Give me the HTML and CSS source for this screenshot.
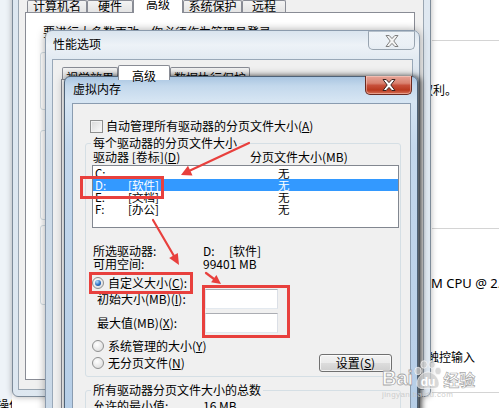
FILE: index.html
```html
<!DOCTYPE html>
<html lang="zh-CN">
<head>
<meta charset="utf-8">
<title>虚拟内存</title>
<link rel="stylesheet" href="styles.css">
</head>
<body>
<div class="desk">
  <div class="cp">
    <div class="cp-nav"><span class="nav-frag">操作</span></div>
    <div class="cp-main">
      <div class="cp-rule r1"></div>
      <div class="cp-text t1">权利。</div>
      <div class="cp-rule r2"></div>
      <div class="cp-text t2">M CPU @ 2.50GHz</div>
      <div class="cp-text t3">触控输入</div>
      <div class="cp-rule r3"></div>
    </div>
  </div>

  <div class="win sp">
    <div class="sp-client">
      <div class="tabs sp-tabs">
        <span class="tab tw1">计算机名</span>
        <span class="tab tw2">硬件</span>
        <span class="tab sel tw3">高级</span>
        <span class="tab tw4">系统保护</span>
        <span class="tab tw5">远程</span>
      </div>
      <div class="sp-panel">
        <div class="sp-note">要进行大多数更改，你必须作为管理员登录。</div>
        <div class="sp-grp g1"></div>
        <div class="sp-grp g2"></div>
        <div class="sp-grp g3"></div>
      </div>
    </div>
  </div>

  <div class="win pf">
    <div class="titlebar">
      <span class="title">性能选项</span>
      <span class="close close-off"><svg width="14" height="12" viewBox="0 0 14 12"><polygon points="1,0.5 4.2,0.5 7,3.6 9.8,0.5 13,0.5 8.8,6 13,11.5 9.8,11.5 7,8.4 4.2,11.5 1,11.5 5.2,6" fill="#f4f4f4" stroke="#808080" stroke-width="1"/></svg></span>
    </div>
    <div class="pf-client">
      <div class="tabs pf-tabs">
        <span class="tab pw1">视觉效果</span>
        <span class="tab sel pw2">高级</span>
        <span class="tab pw3">数据执行保护</span>
      </div>
      <div class="pf-panel"></div>
    </div>
  </div>

  <div class="win vm">
    <div class="titlebar">
      <span class="title">虚拟内存</span>
      <span class="close close-on"><svg width="14" height="12" viewBox="0 0 14 12"><polygon points="1,0.5 4.2,0.5 7,3.6 9.8,0.5 13,0.5 8.8,6 13,11.5 9.8,11.5 7,8.4 4.2,11.5 1,11.5 5.2,6" fill="#ffffff" stroke="#3b2320" stroke-width="1"/></svg></span>
    </div>
    <div class="vm-client">
      <div class="chk-row"><span class="chk"></span><span>自动管理所有驱动器的分页文件大小(<u>A</u>)</span></div>
      <fieldset class="grp grp1">
        <legend>每个驱动器的分页文件大小</legend>
        <div class="hdr"><span class="col-drv">驱动器 [卷标](<u>D</u>)</span><span>分页文件大小(MB)</span></div>
        <div class="list">
          <div class="row"><span class="c1">C:</span><span class="c2"></span><span>无</span></div>
          <div class="row on"><span class="c1">D:</span><span class="c2">[软件]</span><span>无</span></div>
          <div class="row"><span class="c1">E:</span><span class="c2">[文档]</span><span>无</span></div>
          <div class="row"><span class="c1">F:</span><span class="c2">[办公]</span><span>无</span></div>
        </div>
        <div class="info i1"><span class="lab">所选驱动器:</span><span class="dv">D:</span><span>[软件]</span></div>
        <div class="info"><span class="lab">可用空间:</span><span>99401 MB</span></div>
        <div class="radio-row rc"><span class="radio on"></span><span>自定义大小(<u>C</u>):</span></div>
        <div class="size-row"><span class="sl">初始大小(MB)(<u>I</u>):</span><span class="input"></span></div>
        <div class="size-row s2"><span class="sl">最大值(MB)(<u>X</u>):</span><span class="input"></span></div>
        <div class="radio-row rs"><span class="radio"></span><span>系统管理的大小(<u>Y</u>)</span></div>
        <div class="radio-row rn"><span class="radio"></span><span>无分页文件(<u>N</u>)</span><span class="btn">设置(<u>S</u>)</span></div>
      </fieldset>
      <fieldset class="grp grp2">
        <legend>所有驱动器分页文件大小的总数</legend>
        <div class="info total"><span class="lab">允许的最小值:</span><span>16 MB</span></div>
      </fieldset>
    </div>
  </div>

  <div class="marks">
    <div class="box b1"></div>
    <div class="box b2"></div>
    <div class="box b3"></div>
    <svg class="arrows" width="499" height="408" viewBox="0 0 499 408">
      <g stroke="#e8403d" stroke-width="2.2" stroke-linecap="round" fill="none">
        <line x1="249" y1="143" x2="189" y2="171"/>
        <line x1="153" y1="220" x2="174" y2="256"/>
        <line x1="206" y1="273" x2="214" y2="279"/>
      </g>
      <g fill="#e8403d">
        <polygon points="181,175 192.5,175.5 188,165.8"/>
        <polygon points="179,265 177.8,253 169.2,258"/>
        <polygon points="221,284 216.4,275.1 211.1,282.3"/>
      </g>
    </svg>
  </div>

  <div class="wm">
    <div class="wm-logo">
      <span class="wm-bai">Bai</span>
      <svg class="paw" width="28" height="30" viewBox="0 0 28 30">
        <g fill="rgba(205,205,205,0.75)" stroke="rgba(255,255,255,0.8)" stroke-width="0.8">
          <ellipse cx="4" cy="11" rx="3.2" ry="3.8"/>
          <ellipse cx="10" cy="4.5" rx="3.2" ry="3.8"/>
          <ellipse cx="18" cy="4.5" rx="3.2" ry="3.8"/>
          <ellipse cx="24" cy="11" rx="3.2" ry="3.8"/>
          <path d="M14 12 C20 12 26 19 25 25 C24 29 19 29 14 28 C9 29 4 29 3 25 C2 19 8 12 14 12 Z"/>
        </g>
        <text x="14" y="26" text-anchor="middle" class="du">du</text>
      </svg>
      <span class="wm-jy">经验</span>
    </div>
    <div class="wm-url">jingyan.baidu.com</div>
  </div>
</div>
</body>
</html>
```

FILE: styles.css
```css
* { box-sizing: border-box; }
html, body { margin: 0; padding: 0; }
body {
  width: 499px; height: 408px; overflow: hidden;
  font-family: "Noto Sans CJK SC", "Noto Sans", sans-serif;
  font-size: 12px; color: #000; background: #fff;
}
u { text-decoration: underline; text-underline-offset: 1px; }
.desk { position: relative; width: 499px; height: 408px; overflow: hidden; }

/* control panel behind */
.cp { display: grid; grid-template-columns: 12px 1fr; height: 408px; }
.cp-nav { background: #eef3f8; display: flex; flex-direction: column; justify-content: flex-end; }
.nav-frag { line-height: 12px; white-space: nowrap; margin: 0 0 -3px -3px; }
.cp-main { background: #fff; padding-left: 409px; }
.cp-rule { height: 1px; background: #d4d4d4; margin-left: 11px; }
.cp-text { line-height: 12px; white-space: nowrap; }
.r1 { margin-top: 40px; }
.t1 { margin-top: 43px; }
.r2 { margin-top: 132px; }
.t2 { margin-top: 48px; margin-left: 10px; font-family: "Noto Sans", sans-serif; font-size: 13px; }
.t3 { margin-top: 62px; margin-left: 6px; }
.r3 { margin-top: 29px; }

/* windows */
.win { position: absolute; display: flex; flex-direction: column; }
.titlebar { display: flex; justify-content: space-between; align-items: flex-start; flex: none; }
.title { line-height: 12px; margin-left: 1px; white-space: nowrap; }
.close {
  width: 47px; height: 19px; flex: none;
  display: flex; align-items: center; justify-content: center;
  border-radius: 0 0 5px 5px;
}
.close-off {
  border: 1px solid #98a4b0; border-top-color: #b5c0cb;
  background: linear-gradient(rgba(255,255,255,0.55), rgba(225,232,240,0.5));
}
.close-on {
  border: 1px solid #6a2a20; border-top: none;
  background: linear-gradient(#e7a598 0%, #d98270 40%, #c7503b 52%, #b9391f 78%, #d8745a 100%);
  box-shadow: inset 0 0 0 1px rgba(255,220,210,0.45);
}

/* tabs */
.tabs { display: flex; align-items: flex-end; flex: none; }
.tab {
  height: 12px; border: 1px solid #898c95; border-bottom: none;
  border-radius: 2px 2px 0 0;
  background: linear-gradient(#f3f3f3, #e4e4e4);
  text-align: center; white-space: nowrap;
}
.tab.sel { height: 15px; margin-bottom: -1px; background: #fff; position: relative; z-index: 1; }

/* system properties */
.sp {
  left: 12px; top: -30px; width: 419px; height: 427px;
  border: 1px solid #7d8b99; border-radius: 0 0 6px 6px;
  background: linear-gradient(90deg, #dde7f0, #e9eff5 50%, #dfe8f1);
  padding: 27px 6px 6px 5px;
  box-shadow: 0 0 6px rgba(0,0,0,0.3);
}
.sp-client {
  flex: 1; display: flex; flex-direction: column;
  background: #f0f0f0; border: 1px solid #9aa6b2;
  padding: 0 8px 0 6px;
}
.sp-tabs { height: 12px; margin-top: 1px; margin-left: 2px; }
.sp-tabs .tab { line-height: 9px; }
.sp-tabs .tab.sel { line-height: 10px; }
.tw1 { width: 60px; } .tw2 { width: 46px; } .tw3 { width: 50px; } .tw4 { width: 59px; } .tw5 { width: 44px; }
.sp-panel { height: 368px; flex: none; background: #fff; border: 1px solid #898c95; padding: 13px 0 0 14px; }
.sp-note { margin-left: 3px; line-height: 12px; white-space: nowrap; }
.sp-grp { width: 360px; border: 1px solid #d5dfe5; border-radius: 3px; }
.g1 { margin-top: 14px; height: 58px; }
.g2 { margin-top: 20px; height: 90px; }
.g3 { margin-top: 5px; height: 80px; }

/* performance options */
.pf {
  left: 45px; top: 30px; width: 375px; height: 390px;
  border: 1px solid #8b9bad; border-radius: 7px 7px 0 0;
  padding: 0 6px;
  background: linear-gradient(180deg, #d9e4ee 0%, #edf2f7 14px, #e2eaf2 28px, #cddbe8 120px, #c9d8e7 100%);
  box-shadow: 0 0 8px rgba(0,0,0,0.35);
}
.pf .titlebar { height: 28px; }
.pf .title { margin-top: 7px; }
.pf .close { margin-right: -2px; }
.pf-client {
  flex: 1; display: flex; flex-direction: column;
  background: #f0f0f0; border: 1px solid #99a8b8; padding-left: 8px;
}
.pf-tabs { height: 14px; margin-top: 5px; margin-left: 1px; }
.pf-tabs .tab { line-height: 12px; padding-top: 4px; }
.pw1 { width: 56px; } .pw2 { width: 52px; } .pw3 { width: 80px; }
.pf-panel { flex: 1; background: #fff; border: 1px solid #898c95; }

/* virtual memory */
.vm {
  left: 64px; top: 76px; width: 354px; height: 340px;
  border: 1px solid #4f6378; border-radius: 6px 6px 0 0;
  padding: 0 6px 0 7px;
  background: linear-gradient(180deg, #a9c5e1 0%, #c3d8ec 9px, #d6e5f3 24px, #c4d8ed 70px, #b6cee7 100%);
  box-shadow: 3px 0 5px rgba(0,0,0,0.55), 0 0 10px rgba(0,0,0,0.35);
}
.vm .titlebar { height: 26px; }
.vm .title { margin-top: 6px; }
.vm .close { margin-top: -1px; margin-right: -1px; }
.vm-client { flex: 1; background: #f0f0f0; border: 1px solid #8a9cb0; }

.chk-row { display: flex; align-items: center; height: 14px; margin-top: 15px; padding-left: 17px; line-height: 12px; white-space: nowrap; }
.chk {
  width: 13px; height: 13px; flex: none; margin-right: 3px;
  border: 1px solid #8e8f8f;
  background: linear-gradient(135deg, #d8d8d8, #fbfbfb);
  box-shadow: inset 0 0 0 1px #f2f2f2;
}

.grp {
  margin: 4px 0 0 12px; width: 316px; min-width: 0;
  border: 1px solid #d5dfe5; border-radius: 3px;
  padding: 2px 1px 4px 5px;
}
.grp legend { padding: 0 2px; margin: 0; line-height: 12px; }
.hdr { display: flex; height: 12px; line-height: 12px; margin-left: 2px; white-space: nowrap; }
.col-drv { width: 157px; flex: none; }

.list { margin: 2px 0 0 1px; height: 63px; border: 1px solid #828790; background: #fff; padding-top: 1px; }
.row { display: flex; height: 12px; line-height: 12px; padding-left: 2px; white-space: nowrap; font-size: 11.5px; }
.row.on { background: #3399ff; color: #fff; }
.c1 { width: 33px; flex: none; }
.c2 { width: 150px; flex: none; }

.info { display: flex; height: 13px; line-height: 13px; margin-left: 2px; white-space: nowrap; }
.i1 { margin-top: 16px; }
.lab { width: 110px; flex: none; }
.dv { width: 26px; flex: none; }

.radio-row { display: flex; align-items: center; line-height: 12px; margin-left: 1px; white-space: nowrap; }
.rc { margin-top: 7px; height: 12px; }
.rs { margin-top: 7px; height: 12px; }
.rn { margin-top: 2px; height: 18px; }
.radio {
  width: 12px; height: 12px; flex: none; margin-right: 4px; position: relative;
  border-radius: 50%; border: 1px solid #8e8f8f;
  background: radial-gradient(circle at 40% 35%, #ffffff, #d6d6d6);
}
.radio.on::after {
  content: ""; position: absolute; left: 2px; top: 2px; width: 6px; height: 6px; border-radius: 50%;
  background: radial-gradient(circle at 35% 30%, #b8e2ff, #2a6fc4 55%, #123f7f);
}

.size-row { display: flex; align-items: center; height: 20px; line-height: 12px; white-space: nowrap; }
.s2 { margin-top: 4px; }
.sl { margin-left: 6px; width: 108px; flex: none; }
.input {
  width: 73px; height: 20px; flex: none; background: #fff;
  border: 1px solid; border-color: #abadb3 #dbdfe6 #e3e9ef #e2e3ea;
}

.btn {
  margin-left: auto; margin-right: 7px; width: 73px; height: 18px; flex: none;
  border: 1px solid #707070; border-radius: 3px;
  background: linear-gradient(#f2f2f2 0%, #ebebeb 49%, #dddddd 50%, #cfcfcf 100%);
  box-shadow: inset 0 0 0 1px rgba(255,255,255,0.7);
  text-align: center; line-height: 16px;
}

.grp2 { margin-top: 7px; }
.total { margin-top: 1px; }

/* annotations */
.marks { position: absolute; left: 0; top: 0; width: 499px; height: 408px; pointer-events: none; }
.box { position: absolute; border: 3px solid #e8403d; }
.b1 { left: 80px; top: 176px; width: 84px; height: 23px; }
.b2 { left: 89px; top: 272px; width: 104px; height: 22px; }
.b3 { left: 202px; top: 285px; width: 88px; height: 53px; }
.arrows { position: absolute; left: 0; top: 0; }

/* watermark */
.wm { position: absolute; left: 382px; top: 360px; pointer-events: none; }
.wm-logo { display: flex; align-items: flex-end; }
.wm-bai {
  font: bold 20px/20px "Liberation Sans", sans-serif;
  color: rgba(255,255,255,0.9); -webkit-text-stroke: 0.8px rgba(150,150,150,0.85);
}
.paw { display: block; margin: 0 1px -2px 1px; }
.du { font: bold 12px "Liberation Sans", sans-serif; fill: #ffffff; }
.wm-jy {
  font: bold 16px/18px "Noto Sans CJK SC", sans-serif;
  color: rgba(255,255,255,0.9); -webkit-text-stroke: 0.7px rgba(150,150,150,0.85);
}
.wm-url { font: 8px/8px "Liberation Sans", sans-serif; color: rgba(200,200,200,0.9); margin-top: 3px; letter-spacing: 0.4px; }
```
